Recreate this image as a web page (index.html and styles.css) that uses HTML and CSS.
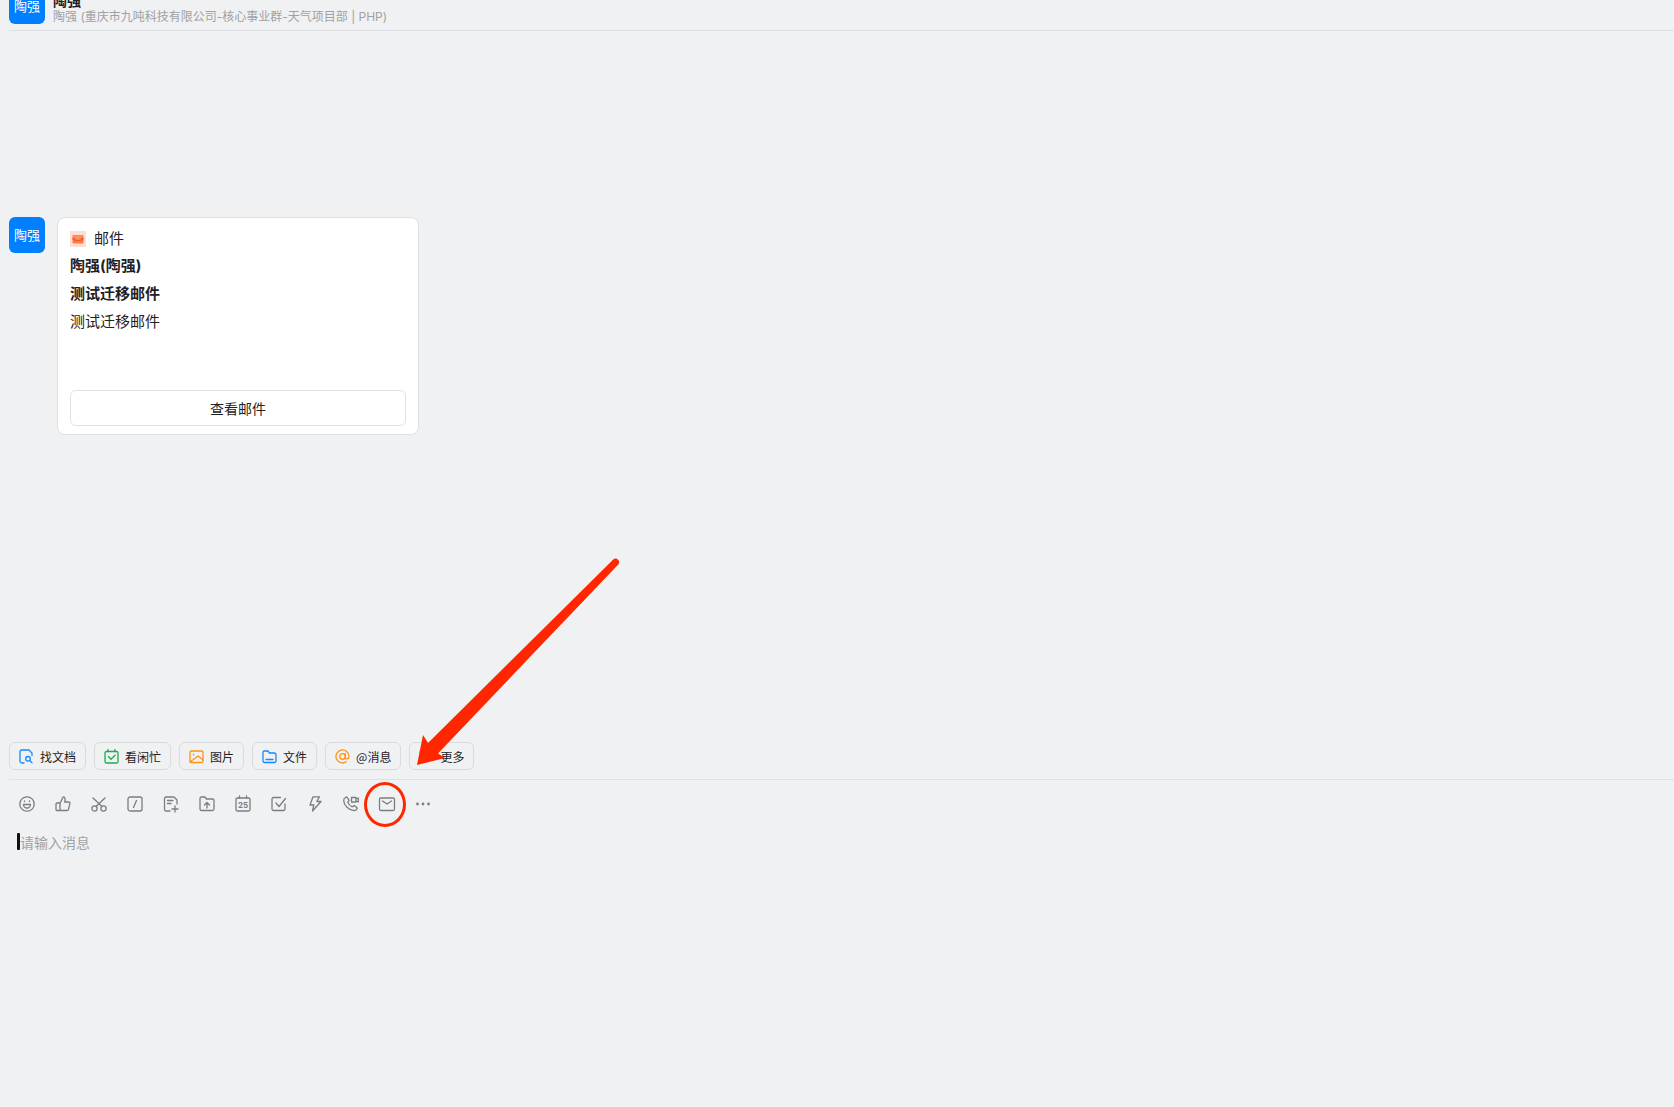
FILE: index.html
```html
<!DOCTYPE html>
<html lang="zh-CN">
<head>
    <meta charset="UTF-8">
    <meta name="viewport" content="width=device-width, initial-scale=1.0">
    <title>陶强</title>
    <link rel="stylesheet" href="styles.css">
</head>
<body>
    <div class="chat">
        <!-- En-tête de la conversation -->
        <header class="chat-header">
            <div class="avatar">陶强</div>
            <div class="chat-info">
                <h1>陶强</h1>
                <p>陶强 (重庆市九吨科技有限公司-核心事业群-天气项目部 | PHP)</p>
            </div>
        </header>

        <!-- Messages -->
        <main class="messages">
            <div class="message">
                <div class="avatar">陶强</div>
                <article class="card">
                    <div class="card-type">
                        <svg width="16" height="16" viewBox="0 0 16 16">
                            <rect width="16" height="16" fill="#ffded6"/>
                            <rect x="2.5" y="4" width="11" height="8.5" rx="1" fill="#ff7a45"/>
                            <path d="M2.5 4.500h11L8 9z" fill="#ff9360"/>
                            <path d="M2.500 6.500L6 9h4l3.500-2.500v2L10 10H6L2.500 8.500z" fill="#f4562a"/>
                        </svg>
                        <span>邮件</span>
                    </div>
                    <h2>陶强(陶强)</h2>
                    <h2>测试迁移邮件</h2>
                    <p>测试迁移邮件</p>
                    <button class="card-btn" type="button">查看邮件</button>
                </article>
            </div>
        </main>

        <!-- Raccourcis -->
        <div class="shortcuts">
            <button class="chip" type="button">
                <svg class="blue" viewBox="0 0 15 15"><path d="M5 14H3a2 2 0 0 1-2-2V3a2 2 0 0 1 2-2h7l3 3v2.5"/><circle cx="9" cy="9.800" r="2.300"/><path d="M10.800 11.600L13 13.800"/></svg>
                找文档
            </button>
            <button class="chip" type="button">
                <svg class="green" viewBox="0 0 15 15"><rect x="1" y="2.500" width="13" height="11.500" rx="1.500"/><path d="M4 .5v2M11 .5v2M4.500 7.500l2.500 2.700 4-4"/></svg>
                看闲忙
            </button>
            <button class="chip" type="button">
                <svg class="orange" viewBox="0 0 15 15"><rect x="1" y="2" width="13" height="11.500" rx="1.500"/><path d="M1 13l8-6 5 4M4.500 5.200v.8"/></svg>
                图片
            </button>
            <button class="chip" type="button">
                <svg class="blue" viewBox="0 0 15 15"><path d="M1 12V3.500A1.500 1.500 0 0 1 2.500 2H6l1.500 2h5A1.500 1.500 0 0 1 14 5.500V12a1.500 1.500 0 0 1-1.500 1.500h-10A1.500 1.500 0 0 1 1 12zM4 10.500h7"/></svg>
                文件
            </button>
            <button class="chip" type="button">
                <svg class="orange" viewBox="0 0 15 15"><circle cx="7.500" cy="7.500" r="2.800"/><path d="M10.300 4.700v3.500c0 2.600 3.700 2.200 3.700-.7a6.500 6.500 0 1 0-2.800 5.300"/></svg>
                @消息
            </button>
            <button class="chip chip-more" type="button">
                <svg class="grey" viewBox="0 0 15 15"><path d="M1 3h13M1 7.500h13M1 12h6"/></svg>
                更多
                <svg class="arrow" viewBox="0 0 204 208"><path d="M0 207L6 177l5 8L196.500 1.200a3.600 3.600 0 0 1 5 5L21 195.500l7 4.500z"/></svg>
            </button>
        </div>

        <!-- Zone de saisie -->
        <footer class="composer">
            <div class="toolbar">
                <button type="button" aria-label="表情"><svg viewBox="0 0 16 16"><circle cx="8" cy="8" r="7.200"/><path d="M4.500 8.500h7a3.500 3.500 0 0 1-7 0zM5.500 5v.5M10.500 5v.5"/></svg></button>
                <button type="button" aria-label="点赞"><svg viewBox="0 0 16 16"><path d="M5 7H2a1 1 0 0 0-1 1v5.500a1 1 0 0 0 1 1h10a1.500 1.500 0 0 0 1.500-1.200l1.400-5.600A1.300 1.300 0 0 0 13.600 6H9.700c.7-2 .6-5-1.200-5C7.200 1 7.500 4 5 7v7.500"/></svg></button>
                <button type="button" aria-label="截图"><svg viewBox="0 0 16 16"><circle cx="3.500" cy="12.500" r="2.600"/><circle cx="12.500" cy="12.500" r="2.600"/><path d="M2 2l9 8.500M14 2L5 10.500"/></svg></button>
                <button type="button" aria-label="快捷指令"><svg viewBox="0 0 16 16"><rect x="1" y="1" width="14" height="14" rx="2"/><path d="M9.500 4.500l-3 7"/></svg></button>
                <button type="button" aria-label="新建文档"><svg viewBox="0 0 16 16"><path d="M7 15H3a1.500 1.500 0 0 1-1.500-1.500v-11A1.500 1.500 0 0 1 3 1h8l3 3v4M4.500 4.500H10M4.500 7.500H8M12 10v6M9 13h6"/></svg></button>
                <button type="button" aria-label="文件"><svg viewBox="0 0 16 16"><path d="M1 13V2.500A1.500 1.500 0 0 1 2.500 1H6l1.500 2h6A1.500 1.500 0 0 1 15 4.500V13a1.500 1.500 0 0 1-1.500 1.500h-11A1.500 1.500 0 0 1 1 13zM8 12V6.500M5.500 9L8 6.500 10.500 9"/></svg></button>
                <button type="button" aria-label="日程"><svg viewBox="0 0 16 16"><rect x="1" y="2" width="14" height="13" rx="1.500"/><path d="M4.500 0v2M11.500 0v2"/><text x="8" y="11.500">25</text></svg></button>
                <button type="button" aria-label="任务"><svg viewBox="0 0 16 16"><path d="M9.500 1.500h-7A1.500 1.500 0 0 0 1 3v10a1.500 1.500 0 0 0 1.500 1.500h10A1.500 1.500 0 0 0 14 13V8M5 7l3 3.500 6.500-8"/></svg></button>
                <button type="button" aria-label="加急"><svg viewBox="0 0 16 16"><path d="M6 .8h6.500L9.800 5.500H14L5.500 15l1.300-6H3z"/></svg></button>
                <button type="button" aria-label="通话"><svg viewBox="0 0 16 16"><path d="M2.200 1.800l1.600-.9 2.300 3.400-1.400 1.800c.8 2.200 2.400 3.700 4.600 4.700l2-1.200 3 2.500c-.5 1.500-1.700 2.500-3.300 2.500C6 14.300.7 9.300.7 4.500c0-1.200.6-2.200 1.500-2.700zM8.500 1.500H13V6H8.500zM13 3l2.300-1v4L13 5"/></svg></button>
                <button class="mail-btn" type="button" aria-label="邮件"><svg viewBox="0 0 16 16"><rect x=".5" y="2" width="15" height="12.500" rx="1.500"/><path d="M3.500 5L8 8l4.500-3"/></svg></button>
                <button type="button" aria-label="更多"><svg class="dots" viewBox="0 0 16 16"><circle cx="2.500" cy="8" r="1.400"/><circle cx="8" cy="8" r="1.400"/><circle cx="13.500" cy="8" r="1.400"/></svg></button>
            </div>
            <div class="editor">
                <textarea rows="12" placeholder="请输入消息" aria-label="请输入消息"></textarea>
            </div>
        </footer>
    </div>
</body>
</html>
```
FILE: styles.css
```css
*, *::before, *::after {
    box-sizing: border-box;
}
body {
    margin: 0;
    background: #f0f1f3;
    color: #1f2124;
    font-family: Inter, "Noto Sans CJK SC", sans-serif;
    font-size: 15px;
}
h1, h2, p {
    margin: 0;
}
button {
    font-family: inherit;
    color: inherit;
    background: none;
    border: none;
    padding: 0;
    cursor: pointer;
}
svg {
    display: block;
    fill: none;
    stroke-linecap: round;
    stroke-linejoin: round;
}
.chat {
    display: flex;
    flex-direction: column;
    min-height: 100vh;
    padding-left: 9px;
    overflow: hidden;
}

/* En-tête */
.chat-header {
    display: flex;
    gap: 8px;
    margin-top: -12px;
    padding-bottom: 6px;
    border-bottom: 1px solid #dee0e3;
}
.chat-info {
    display: flex;
    flex-direction: column;
    justify-content: flex-end;
}
.chat-info h1 {
    font-size: 14px;
    line-height: 18px;
}
.chat-info p {
    color: #9fa1a4;
    font-size: 12px;
    line-height: 14px;
}
.avatar {
    flex: none;
    width: 36px;
    height: 36px;
    border-radius: 6px;
    background: #0080ff;
    color: white;
    font-size: 13px;
    line-height: 36px;
    text-align: center;
}

/* Messages */
.messages {
    flex: 1;
    padding-top: 186px;
}
.message {
    display: flex;
    gap: 12px;
}
.card {
    width: 362px;
    padding: 8px 12px;
    background: white;
    border: 1px solid #dee0e3;
    border-radius: 8px;
}
.card-type {
    display: flex;
    align-items: center;
    gap: 8px;
    line-height: 26px;
}
.card h2, .card p {
    font-size: 15px;
    line-height: 28px;
}
.card-btn {
    display: block;
    width: 100%;
    height: 36px;
    margin-top: 54px;
    border: 1px solid #dee0e3;
    border-radius: 6px;
    font-size: 14px;
}

/* Raccourcis */
.shortcuts {
    display: flex;
    gap: 8px;
    padding-bottom: 9px;
}
.chip {
    display: flex;
    align-items: center;
    gap: 6px;
    height: 28px;
    padding: 0 9px;
    border: 1px solid #d9dbde;
    border-radius: 6px;
    font-family: "Noto Sans CJK SC", sans-serif;
    font-size: 12px;
}
.chip svg {
    width: 15px;
    height: 15px;
    stroke-width: 1.3;
}
.blue {
    stroke: #1488ff;
}
.green {
    stroke: #16b04a;
}
.orange {
    stroke: #ff9214;
}
.grey {
    stroke: #646a73;
}
.chip-more {
    position: relative;
}
.chip .arrow {
    position: absolute;
    left: 7px;
    bottom: 3px;
    width: 204px;
    height: 208px;
    fill: #ff2600;
    pointer-events: none;
}

/* Zone de saisie */
.composer {
    padding-bottom: 11px;
    border-top: 1px solid #dee0e3;
}
.toolbar {
    display: flex;
    padding: 6px 0;
}
.toolbar button {
    display: flex;
    align-items: center;
    justify-content: center;
    width: 36px;
    height: 36px;
}
.toolbar svg {
    width: 16px;
    height: 16px;
    stroke: #7b7d80;
    stroke-width: 1.3;
    overflow: visible;
}
.toolbar text {
    fill: #7b7d80;
    stroke: none;
    font-size: 8px;
    font-weight: bold;
    text-anchor: middle;
}
.toolbar .dots {
    fill: #7b7d80;
    stroke: none;
}
.mail-btn {
    position: relative;
}
.mail-btn::after {
    content: "";
    position: absolute;
    left: -5px;
    top: -4px;
    width: 42px;
    height: 45px;
    border: 3px solid #ff2600;
    border-radius: 50%;
}
.editor {
    position: relative;
    padding: 4px 11px 0;
}
.editor::before {
    content: "";
    position: absolute;
    left: 8px;
    top: 5px;
    width: 3px;
    height: 17px;
    border-radius: 1px;
    background: #111;
}
.editor textarea {
    display: block;
    width: 100%;
    padding: 0;
    border: none;
    outline: none;
    resize: none;
    background: none;
    font-family: inherit;
    font-size: 14px;
    line-height: 22px;
}
.editor textarea::placeholder {
    color: #9fa1a4;
}
```
